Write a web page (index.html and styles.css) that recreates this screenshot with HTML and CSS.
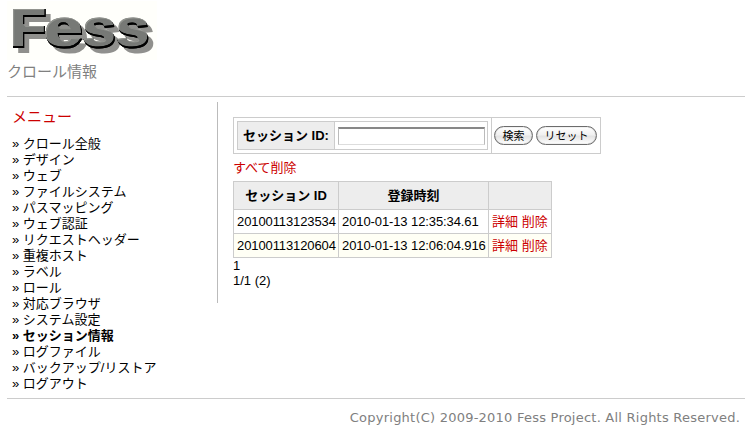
FILE: index.html
```
<!DOCTYPE html>
<html lang="ja">
<head>
<meta charset="utf-8">
<title>Fess</title>
<link rel="stylesheet" href="styles.css">
</head>
<body>
<header class="header">
  <svg class="logo" width="150" height="59" viewBox="7 1 150 59" role="img" aria-label="Fess">
    <defs>
      <filter id="bevel" filterUnits="userSpaceOnUse" x="7" y="1" width="150" height="59" color-interpolation-filters="sRGB">
        <feGaussianBlur in="SourceAlpha" stdDeviation=".5" result="soft"/>
        <feOffset in="soft" dx="5" dy="5" result="castShape"/>
        <feFlood flood-color="#90908d"/>
        <feComposite in2="castShape" operator="in" result="cast"/>
        <feOffset in="SourceAlpha" dx="-1" dy="-2" result="lifted"/>
        <feComposite in="SourceAlpha" in2="lifted" operator="out" result="edge"/>
        <feGaussianBlur in="edge" stdDeviation=".4" result="edgeSoft"/>
        <feFlood flood-color="#000"/>
        <feComposite in2="edgeSoft" operator="in" result="dark"/>
        <feOffset in="SourceAlpha" dx="1.3" dy="1.3" result="lowered"/>
        <feComposite in="SourceAlpha" in2="lowered" operator="out" result="rim"/>
        <feGaussianBlur in="rim" stdDeviation=".7" result="rimSoft"/>
        <feFlood flood-color="#92948f"/>
        <feComposite in2="rimSoft" operator="in" result="light"/>
        <feMerge>
          <feMergeNode in="cast"/>
          <feMergeNode in="SourceGraphic"/>
          <feMergeNode in="light"/>
          <feMergeNode in="dark"/>
          <feMergeNode in="dark"/>
        </feMerge>
      </filter>
    </defs>
    <text class="logo-text" y="47" filter="url(#bevel)"><tspan x="10.5" textLength="36" lengthAdjust="spacingAndGlyphs">F</tspan><tspan x="44.5" textLength="38.5" lengthAdjust="spacingAndGlyphs">e</tspan><tspan x="83" textLength="33" lengthAdjust="spacingAndGlyphs">s</tspan><tspan x="116.5" textLength="33" lengthAdjust="spacingAndGlyphs">s</tspan></text>
  </svg>
  <h1 class="page-title">クロール情報</h1>
</header>
<div class="body">
  <nav class="menu">
    <h2 class="menu-title">メニュー</h2>
    <ul class="menu-list">
      <li>クロール全般</li>
      <li>デザイン</li>
      <li>ウェブ</li>
      <li>ファイルシステム</li>
      <li>パスマッピング</li>
      <li>ウェブ認証</li>
      <li>リクエストヘッダー</li>
      <li>重複ホスト</li>
      <li>ラベル</li>
      <li>ロール</li>
      <li>対応ブラウザ</li>
      <li>システム設定</li>
      <li class="current">セッション情報</li>
      <li>ログファイル</li>
      <li>バックアップ/リストア</li>
      <li>ログアウト</li>
    </ul>
  </nav>
  <main class="content">
    <form class="search">
      <div class="criteria">
        <div class="field">
          <label class="field-label" for="sid">セッション ID:</label>
          <div class="field-value"><input id="sid" class="text-input" type="text"></div>
        </div>
      </div>
      <div class="actions">
        <button class="button find" type="button">検索</button>
        <button class="button reset" type="button">リセット</button>
      </div>
    </form>
    <a class="link delete-all">すべて削除</a>
    <table class="sessions">
      <colgroup><col class="col-id"><col class="col-time"><col class="col-ops"></colgroup>
      <tr><th>セッション ID</th><th>登録時刻</th><th></th></tr>
      <tr><td class="num">20100113123534</td><td class="num">2010-01-13 12:35:34.61</td><td><a class="link">詳細</a> <a class="link">削除</a></td></tr>
      <tr class="even"><td class="num">20100113120604</td><td class="num">2010-01-13 12:06:04.916</td><td><a class="link">詳細</a> <a class="link">削除</a></td></tr>
    </table>
    <div class="pager">1<br>1/1 (2)</div>
  </main>
</div>
<footer class="footer">Copyright(C) 2009-2010 Fess Project. All Rights Reserved.</footer>
</body>
</html>
```
FILE: styles.css
```
* { box-sizing: border-box; }
body {
  margin: 0;
  padding: 1px 7px 0;
  height: 434px;
  overflow: hidden;
  background: #fff;
  color: #000;
  font: 13px/16px "Liberation Sans", "Noto Sans CJK JP", sans-serif;
}
.header { height: 96px; border-bottom: 1px solid #ccc; }
.logo { display: block; background: #fffffb; overflow: visible; }
.logo-text { font: bold 53px "Liberation Sans", sans-serif; fill: #777976; stroke: #777976; stroke-width: 2.2; }
.page-title { margin: 0; font-size: 15px; line-height: 23px; font-weight: normal; color: #808080; }
.body { display: flex; height: 301px; padding-top: 5px; }
.menu { width: 211px; height: 201px; padding: 5px 5px 0; border-right: 1px solid #bbb; white-space: nowrap; }
.menu-title { margin: 0 0 9px; font-size: 15px; line-height: 20px; font-weight: normal; color: #c00; }
.menu-list { margin: 0; padding: 0; list-style: none; }
.menu-list li { height: 16px; }
.menu-list li::before { content: "» "; }
.current { font-weight: bold; }
.content { padding: 15px 0 0 15px; }
.search { display: flex; width: 368px; height: 37px; border: 1px solid #ccc; }
.criteria { width: 258px; padding: 3px; border-right: 1px solid #ccc; }
.field { display: flex; width: 251px; height: 29px; border: 1px solid #ccc; }
.field-label { flex: none; width: 97px; line-height: 27px; padding-left: 5px; background: #ededed; border-right: 1px solid #ccc; font-weight: bold; white-space: nowrap; }
.field-value { flex: none; padding: 5px 0 5px 3px; }
.text-input { display: block; width: 147px; height: 18px; padding: 0 2px; border: 1px solid #bbb; border-top: 2px solid #888; border-bottom-color: #ddd; background: #fff; font: inherit; outline: 0; }
.actions { display: flex; gap: 3px; padding: 8px 0 0 2px; }
.button { height: 19px; padding: 0; border: 1px solid #6c6c6c; border-radius: 10px; background: linear-gradient(#fff, #f1f1f1 45%, #e4e4e4 55%, #fff); box-shadow: inset 0 0 1px #777; color: #000; font: 11px/16px "Liberation Sans", "Noto Sans CJK JP", sans-serif; }
.find { width: 39px; }
.reset { width: 61px; }
.link { color: #c00; text-decoration: none; }
.delete-all { display: block; height: 27px; line-height: 27px; }
.sessions { width: 318px; table-layout: fixed; border-collapse: collapse; white-space: nowrap; }
.col-id { width: 105px; }
.col-time { width: 150px; }
.col-ops { width: 63px; }
.sessions th, .sessions td { height: 24px; padding: 0 3px; border: 1px solid #ccc; line-height: 16px; text-align: left; }
.sessions th { height: 28px; background: #ededed; text-align: center; }
.sessions .num { letter-spacing: -.1px; }
.even td { background: #fffff5; }
.pager { line-height: 15px; }
.footer { height: 36px; padding: 10px 5px 0 0; border-top: 1px solid #ccc; color: #808080; font: 13px/18px "DejaVu Sans", sans-serif; letter-spacing: .23px; text-align: right; }
```
